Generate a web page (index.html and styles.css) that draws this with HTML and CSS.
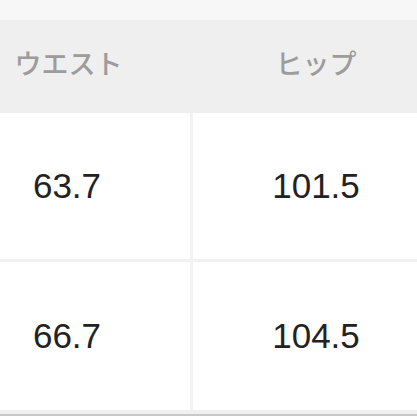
FILE: index.html
```html
<!DOCTYPE html>
<html lang="ja">
<head>
<meta charset="utf-8">
<link rel="stylesheet" href="styles.css">
</head>
<body>
<div class="page">
  <div class="topstrip"></div>
  <div class="table">
    <div class="head">
      <div class="hcell">ウエスト</div>
      <div class="hcell">ヒップ</div>
    </div>
    <div class="row">
      <div class="cell">63.7</div>
      <div class="cell">101.5</div>
    </div>
    <div class="row row-last">
      <div class="cell">66.7</div>
      <div class="cell">104.5</div>
    </div>
  </div>
  <div class="bottomband"></div>
</div>
</body>
</html>
```

FILE: styles.css
```css
html, body {
  margin: 0;
  padding: 0;
  background: #ffffff;
}
.page {
  width: 417px;
  height: 417px;
  overflow: hidden;
  display: flex;
  flex-direction: column;
}
.topstrip {
  height: 20px;
  background: #f7f7f7;
  flex: none;
}
.table {
  margin-left: -56px;
  width: 600px;
  display: flex;
  flex-direction: column;
  flex: none;
}
.head {
  display: grid;
  grid-template-columns: 249px 246px;
  height: 93px;
  background: #efefef;
}
.hcell {
  display: flex;
  align-items: center;
  justify-content: center;
  font-family: "Noto Sans CJK JP", sans-serif;
  font-size: 27px;
  font-weight: 500;
  color: #9c9c9c;
  padding-bottom: 9px;
}
.row {
  display: grid;
  grid-template-columns: 249px 246px;
  height: 146px;
  border-bottom: 3px solid #f2f2f2;
}
.row-last {
  height: 148px;
  border-bottom: none;
}
.cell {
  display: flex;
  align-items: center;
  justify-content: center;
  font-family: "Liberation Sans", Arial, sans-serif;
  font-size: 35px;
  color: #222222;
}
.cell:first-child {
  border-right: 3px solid #f2f2f2;
}
.bottomband {
  height: 4px;
  background: #f0f0f0;
  border-bottom: 2px solid #c8c8c8;
  flex: none;
}
```
